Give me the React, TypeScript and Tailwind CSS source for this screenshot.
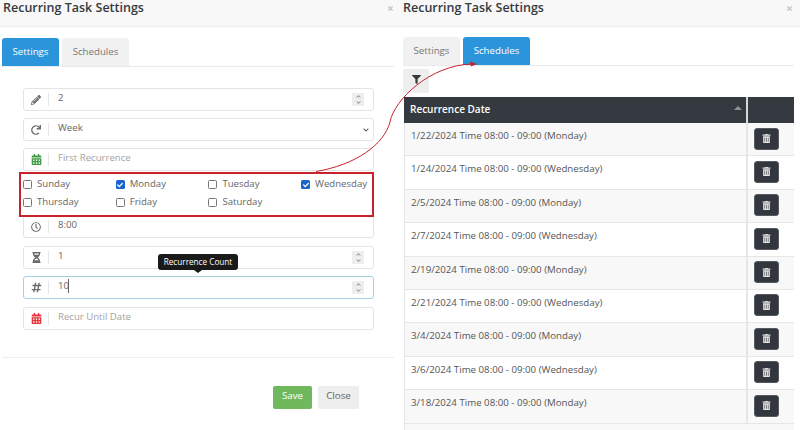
import { ReactNode } from "react";
import { FaPencilAlt, FaRedo, FaCalendarAlt, FaRegClock, FaHourglassHalf, FaHashtag, FaFilter, FaTrashAlt, FaTimes, FaChevronDown, FaChevronUp, FaCheck } from "react-icons/fa";

const rows = [
  "1/22/2024 Time 08:00 - 09:00 (Monday)",
  "1/24/2024 Time 08:00 - 09:00 (Wednesday)",
  "2/5/2024 Time 08:00 - 09:00 (Monday)",
  "2/7/2024 Time 08:00 - 09:00 (Wednesday)",
  "2/19/2024 Time 08:00 - 09:00 (Monday)",
  "2/21/2024 Time 08:00 - 09:00 (Wednesday)",
  "3/4/2024 Time 08:00 - 09:00 (Monday)",
  "3/6/2024 Time 08:00 - 09:00 (Wednesday)",
  "3/18/2024 Time 08:00 - 09:00 (Monday)",
];

const days = [
  { name: "Sunday", on: false },
  { name: "Monday", on: true },
  { name: "Tuesday", on: false },
  { name: "Wednesday", on: true },
  { name: "Thursday", on: false },
  { name: "Friday", on: false },
  { name: "Saturday", on: false },
];

function Spinner() {
  return (
    <span className="ml-auto mr-[9px] flex h-[13px] w-[12px] flex-col items-center justify-center gap-[1px] bg-[#eeeeee] text-[#8a8a8a]">
      <FaChevronUp className="text-[5px]" />
      <FaChevronDown className="text-[5px]" />
    </span>
  );
}

function Field({ icon, text, placeholder, spin, focus, caret, chevron, cls }: { icon: ReactNode; text: string; placeholder?: boolean; spin?: boolean; focus?: boolean; caret?: boolean; chevron?: boolean; cls?: string }) {
  return (
    <div className={`flex h-[23px] w-[351px] items-center rounded-[3px] border ${focus ? "border-[#a5d0e4]" : "border-[#e4e4e4]"} bg-white ${cls || ""}`}>
      <span className="flex w-[24px] shrink-0 justify-center text-[11px] text-[#6b6b6b]">{icon}</span>
      <span className="h-[13px] w-px shrink-0 bg-[#e6e6e6]" />
      <span className={`ml-[9px] flex items-center pb-[2px] text-[9.6px] ${placeholder ? "text-[#a3a3a3]" : "text-[#666666]"}`}>
        {text}
        {caret && <span className="-ml-[1px] h-[14px] w-px bg-[#666666]" />}
      </span>
      {spin && <Spinner />}
      {chevron && <FaChevronDown className="ml-auto mr-[4px] text-[6px] text-[#555555]" />}
    </div>
  );
}

function Tabs({ active }: { active: string }) {
  return (
    <div className="flex gap-[3px] border-b border-[#eaeaea]">
      <div className={`flex h-[28px] w-[57px] items-center justify-center rounded-t-[3px] text-[9.7px] ${active === "Settings" ? "bg-[#2b95dc] text-white" : "bg-[#f1f1f1] text-[#777777]"}`}>
        Settings
      </div>
      <div className={`flex h-[28px] w-[67px] items-center justify-center rounded-t-[3px] text-[9.7px] ${active === "Schedules" ? "bg-[#2b95dc] text-white" : "bg-[#f1f1f1] text-[#777777]"}`}>
        Schedules
      </div>
    </div>
  );
}

function Header({ cls }: { cls?: string }) {
  return (
    <div className={`flex h-[27px] items-start justify-between border-b border-[#eeeeee] bg-[#f8f8f8] ${cls || ""}`}>
      <span className="text-[12.5px] font-semibold leading-[15px] text-[#333a40]">Recurring Task Settings</span>
      <FaTimes className="mt-[5px] text-[7px] text-[#c4c4c4]" />
    </div>
  );
}

export default function App() {
  return (
    <div className="relative flex h-[430px] w-[800px] overflow-hidden bg-white font-['Open_Sans',sans-serif]">
      {/* settings side */}
      <div className="w-[400px] shrink-0">
        <Header cls="pl-[3px] pr-[6px]" />
        <div className="ml-[2px] mr-[6px] mt-[11px]">
          <Tabs active="Settings" />
        </div>
        <div className="ml-[23px] mt-[21px] flex flex-col">
          <Field icon={<FaPencilAlt className="text-[10px]" />} text="2" spin />
          <Field icon={<FaRedo className="text-[10px]" />} text="Week" chevron cls="mt-[7px]" />
          <Field icon={<FaCalendarAlt className="text-[#3f9b45]" />} text="First Recurrence" placeholder cls="mt-[7px]" />
          <div className="relative z-10 -ml-[4px] mt-px grid h-[45px] w-[355px] grid-cols-[92.7px_92.7px_92.7px_1fr] content-center gap-y-[4px] border-2 border-[#c8232c] pb-[2px] pl-[2px]">
            {days.map((d) => (
              <div key={d.name} className="flex h-[14px] items-center gap-[5px] text-[9.6px] text-[#666666]">
                {d.on ? (
                  <span className="flex h-[9px] w-[9px] items-center justify-center rounded-[1.5px] bg-[#1a66cc] text-white">
                    <FaCheck className="text-[6px]" />
                  </span>
                ) : (
                  <span className="h-[9px] w-[9px] rounded-[1.5px] border border-[#777777] bg-white" />
                )}
                {d.name}
              </div>
            ))}
          </div>
          <Field icon={<FaRegClock className="text-[10px]" />} text="8:00" cls="-mt-[2px]" />
          <Field icon={<FaHourglassHalf />} text="1" spin cls="mt-[7.5px]" />
          <Field icon={<FaHashtag />} text="10" spin focus caret cls="mt-[7.5px]" />
          <Field icon={<FaCalendarAlt className="text-[#e5343d]" />} text="Recur Until Date" placeholder cls="mt-[7.5px]" />
        </div>
        <div className="ml-[2px] mr-[6px] mt-[27px] border-t border-[#eeeeee]" />
        <div className="mr-[41px] mt-[28px] flex justify-end gap-[6px]">
          <button className="h-[23px] w-[39px] rounded-[2px] bg-[#6fb85c] pb-[2px] text-[9.8px] text-white">Save</button>
          <button className="h-[23px] w-[41px] rounded-[2px] bg-[#eeeeee] pb-[2px] text-[9.8px] text-[#666666]">Close</button>
        </div>
      </div>

      {/* schedules side */}
      <div className="ml-[3px] w-[391px] shrink-0">
        <div className="-mb-px">
          <Header cls="-ml-[3px] -mr-[6px] pl-[3px] pr-[7px]" />
        </div>
        <div className="mt-[11px]">
          <Tabs active="Schedules" />
        </div>
        <button className="mt-[3px] flex h-[24px] w-[26px] items-center justify-center rounded-[2px] bg-[#eeeeee] pb-[4px] text-[#3a3a3a]">
          <FaFilter className="text-[9px]" />
        </button>
        <div className="ml-px mt-[4px] flex h-[26px] bg-[#343a40] text-white">
          <div className="flex flex-1 items-center justify-between border-r-2 border-[#d8d8d8] pb-[1px] pl-[6px] pr-[4px] text-[10px] font-semibold">
            Recurrence Date
            <span className="mb-[4px] h-0 w-0 border-x-[4px] border-b-[4px] border-x-transparent border-b-[#8d9196]" />
          </div>
          <div className="w-[46px]" />
        </div>
        <div className="ml-px border-l border-[#e6e6e6]">
          {rows.map((r, i) => (
            <div key={r} className={`flex h-[33.4px] border-b border-[#e6e6e6] ${i % 2 === 0 ? "bg-[#f8f8f8]" : "bg-white"}`}>
              <div className="flex-1 border-r-2 border-[#e6e6e6] pl-[6px] pt-[6px] text-[9.7px] leading-[14px] text-[#555555]">{r}</div>
              <div className="w-[46px] pl-[6px] pt-[4.5px]">
                <button className="flex h-[22px] w-[25px] items-center justify-center rounded-[3px] border border-[#555a60] bg-[#32363e] text-[#e4e4e4]">
                  <FaTrashAlt className="text-[9px]" />
                </button>
              </div>
            </div>
          ))}
          <div className="h-[20px] bg-[#f8f8f8]" />
        </div>
      </div>

      {/* tooltip */}
      <div className="absolute left-[158px] top-[254px] z-20 flex h-[16px] w-[80px] items-center justify-center rounded-[3px] bg-[#1a1a1a] text-[8.2px] text-white">
        Recurrence Count
        <span className="absolute left-[36px] top-[16px] h-0 w-0 border-x-[4px] border-t-[3px] border-x-transparent border-t-[#1a1a1a]" />
      </div>

      {/* callout arrow */}
      <svg className="absolute left-0 top-0 z-30" width="800" height="430" fill="none">
        <path d="M316 171.5 C355 165 384 145 390 122 C394 100 430 65 472 64" stroke="#c8232c" strokeWidth="1" />
        <path d="M477 64 L470 61.5 L471 66.5 Z" fill="#c8232c" />
      </svg>
    </div>
  );
}
